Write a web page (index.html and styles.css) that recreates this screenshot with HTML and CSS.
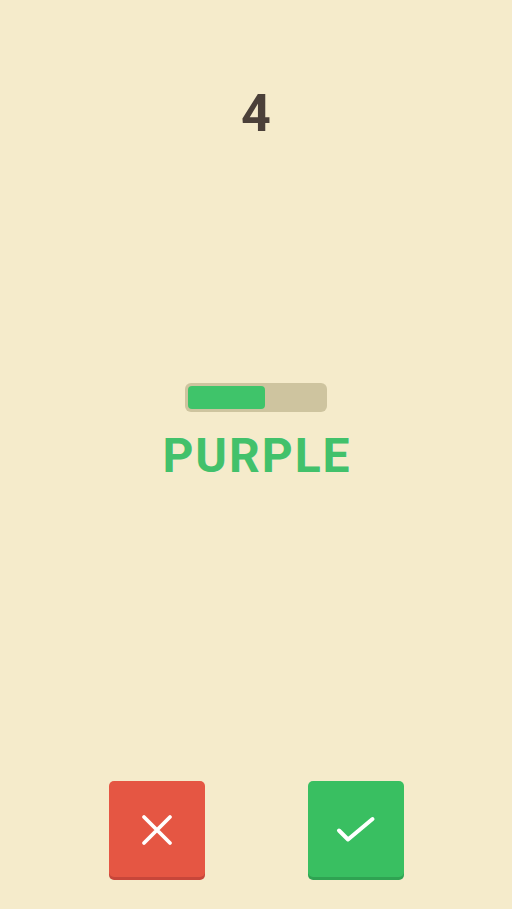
FILE: index.html
```html
<!DOCTYPE html>
<html>
<head>
<meta charset="utf-8">
<link rel="stylesheet" href="styles.css">
</head>
<body>
<div class="screen">
  <div class="score">4</div>
  <div class="middle">
    <div class="timer"><div class="timer-fill" style="width:77px"></div></div>
    <div class="word">PURPLE</div>
  </div>
  <div class="controls">
    <button class="btn btn-no" aria-label="No">
      <svg width="32" height="32" viewBox="0 0 32 32"><path d="M3 3 L29 29 M29 3 L3 29" stroke="#fff" stroke-width="3.8" stroke-linecap="round" fill="none"/></svg>
    </button>
    <button class="btn btn-yes" aria-label="Yes">
      <svg width="40" height="28" viewBox="0 0 40 28"><path d="M3 14.5 L12 23.5 L36.5 3" stroke="#fff" stroke-width="4" stroke-linecap="round" stroke-linejoin="round" fill="none"/></svg>
    </button>
  </div>
</div>
</body>
</html>
```

FILE: styles.css
```css
html, body {
  margin: 0;
  padding: 0;
  background: #f5ebcb;
}
.screen {
  height: 909px;
  display: flex;
  flex-direction: column;
  align-items: center;
  font-family: Roboto, "Liberation Sans", sans-serif;
}
.score {
  padding-top: 88px;
  font-size: 52px;
  line-height: 52px;
  font-weight: 700;
  color: #4b4039;
}
.middle {
  margin-top: 243px;
  display: flex;
  flex-direction: column;
  align-items: center;
  gap: 20px;
}
.timer {
  width: 142px;
  height: 29px;
  box-sizing: border-box;
  padding: 3px;
  background: #cec49f;
  border-radius: 6px;
}
.timer-fill {
  height: 100%;
  background: #3fc46a;
  border-radius: 4px;
}
.word {
  font-size: 48px;
  line-height: 48px;
  font-weight: 700;
  letter-spacing: 2px;
  margin-right: -2px;
  color: #42c16b;
}
.controls {
  margin-top: auto;
  padding-bottom: 29px;
  display: flex;
  gap: 103px;
}
.btn {
  width: 96px;
  height: 96px;
  margin-bottom: 3px;
  border: none;
  border-radius: 5px;
  padding: 0;
  display: flex;
  align-items: center;
  justify-content: center;
}
.btn-no {
  background: #e55643;
  box-shadow: 0 3px 0 #c7463a;
}
.btn-no svg {
  margin-top: 2px;
}
.btn-yes {
  background: #39bf61;
  box-shadow: 0 3px 0 #2fa352;
}
.btn-yes svg {
  margin-top: 2px;
}
```
